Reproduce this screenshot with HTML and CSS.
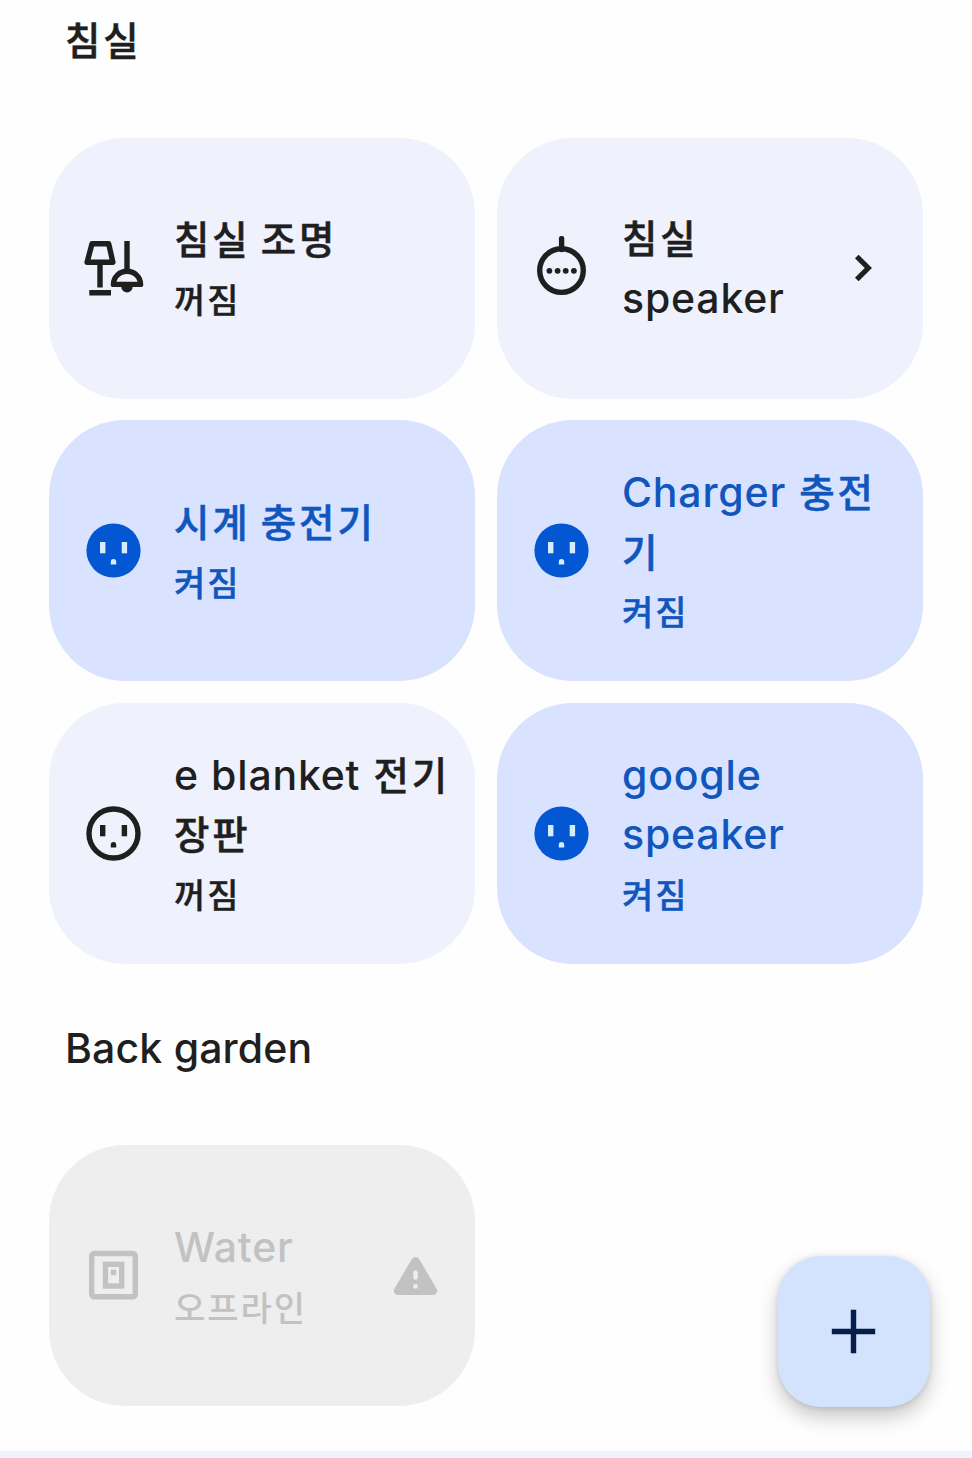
FILE: index.html
```html
<!DOCTYPE html>
<html lang="ko">
<head>
  <meta charset="UTF-8">
  <meta name="viewport" content="width=device-width, initial-scale=1.0">
  <title>Home</title>
  <link rel="stylesheet" href="styles.css">
</head>
<body>
  <!-- Shared icons -->
  <svg class="sprite" width="0" height="0">
    <symbol id="outlet" viewBox="0 0 65 65">
      <rect x="19" y="24" width="5.4" height="11.3"/>
      <rect x="40.7" y="24" width="5.4" height="11.3"/>
      <path d="M29.8 46.4v-2.7a2.7 2.7 0 0 1 5.4 0v2.7z"/>
    </symbol>
  </svg>

  <main class="rooms">
    <!-- Bedroom -->
    <h2 class="room-title">침실</h2>
    <div class="device-grid">
      <div class="device">
        <svg class="icon" viewBox="0 0 65 65">
          <g fill="none" stroke="currentColor" stroke-width="5.4" stroke-linejoin="round">
            <path d="M11 7.8h16.7l4.2 18.5H6.1z"/>
            <path d="M19 27v24.5M8.3 56.7H30M46 5V35"/>
            <path d="M32.4 48.4a13.6 13.2 0 0 1 27.2 0z"/>
          </g>
          <path d="M40.3 50.7a5.7 5.8 0 0 0 11.4 0z" fill="currentColor"/>
        </svg>
        <div class="info">
          <div class="name">침실 조명</div>
          <div class="state">꺼짐</div>
        </div>
      </div>

      <div class="device">
        <svg class="icon" viewBox="0 0 65 65">
          <g fill="none" stroke="currentColor" stroke-width="5.4">
            <circle cx="32.5" cy="34.6" r="21.8"/>
            <path d="M32.6 13.6V2.6" stroke-linecap="round"/>
          </g>
          <g fill="currentColor">
            <circle cx="20.4" cy="34.8" r="2.9"/>
            <circle cx="28.6" cy="34.8" r="2.9"/>
            <circle cx="36.7" cy="34.8" r="2.9"/>
            <circle cx="44.9" cy="34.8" r="2.9"/>
          </g>
        </svg>
        <div class="info no-state">
          <div class="name">침실<br><span class="en">speaker</span></div>
        </div>
        <svg class="icon trailing" viewBox="0 0 65 65">
          <path d="M25.8 20.5 37.3 32 25.8 43.5" fill="none" stroke="currentColor" stroke-width="5.2"/>
        </svg>
      </div>

      <div class="device on">
        <svg class="icon" viewBox="0 0 65 65">
          <circle class="plate" cx="32.5" cy="32.5" r="27.1"/>
          <use href="#outlet" class="slots"/>
        </svg>
        <div class="info">
          <div class="name">시계 충전기</div>
          <div class="state">켜짐</div>
        </div>
      </div>

      <div class="device on">
        <svg class="icon" viewBox="0 0 65 65">
          <circle class="plate" cx="32.5" cy="32.5" r="27.1"/>
          <use href="#outlet" class="slots"/>
        </svg>
        <div class="info">
          <div class="name"><span class="en">Charger</span> 충전<br>기</div>
          <div class="state">켜짐</div>
        </div>
      </div>

      <div class="device">
        <svg class="icon" viewBox="0 0 65 65">
          <circle cx="32.5" cy="32.5" r="24.5" fill="none" stroke="currentColor" stroke-width="5.4"/>
          <use href="#outlet" fill="currentColor"/>
        </svg>
        <div class="info">
          <div class="name"><span class="en">e blanket</span> 전기<br>장판</div>
          <div class="state">꺼짐</div>
        </div>
      </div>

      <div class="device on">
        <svg class="icon" viewBox="0 0 65 65">
          <circle class="plate" cx="32.5" cy="32.5" r="27.1"/>
          <use href="#outlet" class="slots"/>
        </svg>
        <div class="info">
          <div class="name"><span class="en">google<br>speaker</span></div>
          <div class="state">켜짐</div>
        </div>
      </div>
    </div>

    <!-- Back garden -->
    <h2 class="room-title"><span class="en">Back garden</span></h2>
    <div class="device-grid">
      <div class="device offline">
        <svg class="icon" viewBox="0 0 65 65">
          <g fill="none" stroke="currentColor" stroke-width="5.4">
            <rect x="10.7" y="10.5" width="43.6" height="43.2" rx="2.5"/>
            <rect x="24.4" y="21.3" width="16.3" height="21.7"/>
          </g>
          <rect x="29.8" y="26.7" width="5.4" height="5.4" fill="currentColor"/>
        </svg>
        <div class="info">
          <div class="name"><span class="en">Water</span></div>
          <div class="state">오프라인</div>
        </div>
        <svg class="icon trailing" viewBox="0 0 65 65">
          <path d="M32.5 18.2 50 47.8H15z" fill="currentColor" stroke="currentColor" stroke-width="8.4" stroke-linejoin="round"/>
          <path class="mark" d="M32.5 29.9v4.6M32.5 43.3v.1"/>
        </svg>
      </div>
    </div>
  </main>

  <div class="bottom-bar"></div>

  <button class="fab" aria-label="Add">
    <svg width="65" height="65" viewBox="0 0 65 65">
      <path d="M32.5 10.8v43.4M10.8 32.5h43.4" stroke="currentColor" stroke-width="5.4"/>
    </svg>
  </button>
</body>
</html>
```
FILE: styles.css
```css
* {
  box-sizing: border-box;
}

body {
  margin: 0;
  height: 1458px;
  overflow: hidden;
  display: flex;
  flex-direction: column;
  background-color: #fefefe;
  color: #1f1f1f;
  font-family: Inter, "Noto Sans CJK KR", sans-serif;
  font-weight: 500;
}

.sprite {
  position: absolute;
}

.rooms {
  flex: 1;
  padding: 12px 49px 0;
}

.room-title,
.name {
  font-size: 38.5px;
  font-weight: 500;
  line-height: 59.6px;
  letter-spacing: 2.9px;
  word-spacing: -3px;
  -webkit-text-stroke: 0.5px currentColor;
}

.room-title {
  margin: 0;
  padding-left: 16px;
  height: 60px;
}

.device-grid {
  display: grid;
  grid-template-columns: 426px 426px;
  grid-auto-rows: 261px;
  gap: 21.6px 22px;
  margin-top: 65.5px;
}

.device-grid + .room-title {
  margin-top: 56px;
}

.device {
  display: flex;
  align-items: center;
  padding: 0 20px 0 32px;
  border-radius: 76px;
  background-color: #eff2fd;
}

.icon {
  flex: none;
  width: 65px;
  height: 65px;
}

.info {
  flex: 1;
  margin-left: 28px;
  padding-top: 6px;
}

.no-state {
  padding-top: 3px;
}

.state {
  font-size: 34px;
  line-height: 59.6px;
  letter-spacing: 2px;
  -webkit-text-stroke: 0.4px currentColor;
}

/* Latin words */
.en {
  font-size: 41px;
  line-height: 1;
  letter-spacing: 0.8px;
  word-spacing: 0.5px;
  margin-right: 3px;
  -webkit-text-stroke: 0;
}

.room-title .en {
  letter-spacing: 0.1px;
}

.trailing {
  margin-right: 7px;
}

/* Device states */
.on {
  background-color: #d9e2ff;
  color: #1056bd;
}

.plate {
  fill: #0457d2;
}

.slots {
  fill: #d6ecff;
}

.offline {
  background-color: #eeeeee;
  color: #c2c2c2;
}

.offline .state {
  -webkit-text-stroke: 0;
}

.mark {
  stroke: #eeeeee;
  stroke-width: 4.6;
  stroke-linecap: round;
}

.bottom-bar {
  flex: none;
  height: 7px;
  background-color: #eff3fc;
}

.fab {
  position: fixed;
  left: 778px;
  top: 1256px;
  width: 152px;
  height: 151px;
  display: flex;
  align-items: center;
  justify-content: center;
  padding: 0 2px 0 0;
  border: none;
  border-radius: 43px;
  background-color: #d3e3fd;
  color: #041e49;
  box-shadow: 0 10px 20px rgba(0, 0, 0, 0.22), 0 1px 6px rgba(0, 0, 0, 0.12);
}
```
